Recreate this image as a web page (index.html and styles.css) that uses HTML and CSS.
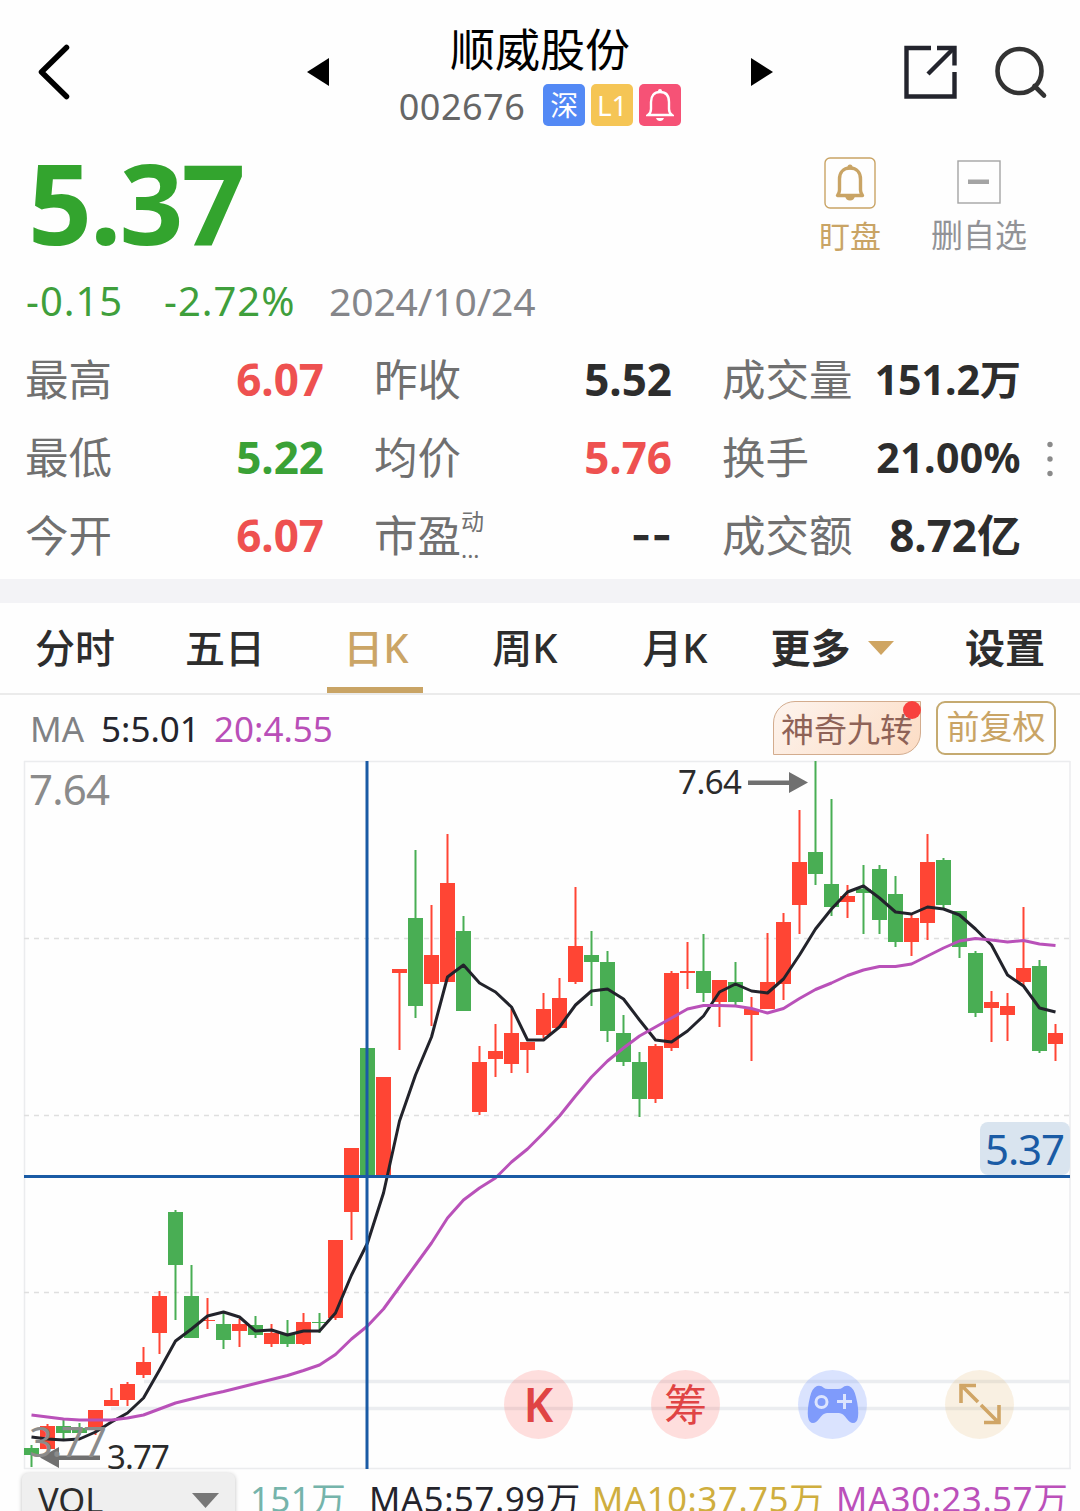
FILE: index.html
```html
<!DOCTYPE html>
<html lang="zh-CN">
<head>
    <meta charset="UTF-8">
    <meta name="viewport" content="width=device-width, initial-scale=1.0">
    <title>顺威股份 002676</title>
    <link rel="stylesheet" href="styles.css">
</head>
<body>
    <header class="topbar">
        <svg class="back" width="34" height="56" viewBox="0 0 34 56"><path d="M29.500 3.500 L4.500 28 L29.500 52.500"/></svg>
        <div class="switcher">
            <svg width="23" height="30" viewBox="0 0 23 30"><path d="M22 1 V29 L0 15 Z"/></svg>
            <div class="stock">
                <h1>顺威股份</h1>
                <div class="stock-sub">
                    <span class="code">002676</span>
                    <span class="badge blue">深</span>
                    <span class="badge yellow">L1</span>
                    <span class="badge pink">
                        <svg width="28" height="34" viewBox="0 0 28 34">
                            <path d="M14 4 C8 4 5 8 5 14 V21 Q5 25 2 27 H26 Q23 25 23 21 V14 C23 8 20 4 14 4 Z" fill="none" stroke="#fff" stroke-width="2.4"/>
                            <circle cx="14" cy="3" r="2" fill="#fff"/>
                            <path d="M10 30 H18 Q17 33 14 33 Q11 33 10 30 Z" fill="#fff"/>
                        </svg>
                    </span>
                </div>
            </div>
            <svg width="23" height="30" viewBox="0 0 23 30"><path d="M1 1 V29 L23 15 Z"/></svg>
        </div>
        <div class="tools">
            <svg width="54" height="54" viewBox="0 0 54 54" fill="none" stroke="#23242d" stroke-width="4.4">
                <path d="M27 3 H2.5 V51.5 H50.5 V27"/>
                <path d="M33 3 H50.5 V20.5"/>
                <path d="M49 4 L24 29"/>
            </svg>
            <svg width="54" height="54" viewBox="0 0 54 54" fill="none" stroke="#333" stroke-width="4.6">
                <circle cx="25.500" cy="26" r="22"/>
                <path d="M40.500 41 L50 50.500" stroke-linecap="round"/>
            </svg>
        </div>
    </header>

    <section class="quote">
        <div class="quote-main">
            <div class="price">5.37</div>
            <div class="change">
                <span class="diff">-0.15</span>
                <span class="pct">-2.72%</span>
                <span class="date">2024/10/24</span>
            </div>
        </div>
        <div class="actions">
            <div class="action watch">
                <svg width="52" height="52" viewBox="0 0 52 52" fill="none" stroke="#c9a465">
                    <rect x="1" y="1" width="50" height="50" rx="5" stroke-width="1.4"/>
                    <path d="M26 11 C19 11 15.500 16 15.500 22 V33 Q15.500 36 13.500 38.500 H38.500 Q36.500 36 36.500 33 V22 C36.500 16 33 11 26 11 Z" stroke-width="3.400" stroke-linejoin="round"/>
                    <circle cx="26" cy="10" r="2.500" fill="#c9a465" stroke="none"/>
                    <path d="M21 39 H31 Q30 43.500 26 43.500 Q22 43.500 21 39 Z" fill="#c9a465" stroke="none"/>
                </svg>
                <span>盯盘</span>
            </div>
            <div class="action remove">
                <svg width="44" height="44" viewBox="0 0 44 44">
                    <rect x="1" y="1" width="42" height="42" fill="none" stroke="#a4a4a4" stroke-width="1.4"/>
                    <rect x="11" y="19.500" width="21" height="4.500" fill="#a4a4a4"/>
                </svg>
                <span>删自选</span>
            </div>
        </div>
    </section>

    <section class="stats">
        <div class="stat"><span>最高</span><b class="up">6.07</b></div>
        <div class="stat"><span>昨收</span><b>5.52</b></div>
        <div class="stat small"><span>成交量</span><b>151.2万</b></div>
        <div class="stat"><span>最低</span><b class="down">5.22</b></div>
        <div class="stat"><span>均价</span><b class="up">5.76</b></div>
        <div class="stat small"><span>换手</span><b class="rate">21.00%</b></div>
        <div class="stat"><span>今开</span><b class="up">6.07</b></div>
        <div class="stat"><span class="pe">市盈<small><i>动</i><i>...</i></small></span><b class="none">--</b></div>
        <div class="stat"><span>成交额</span><b>8.72亿</b></div>
        <svg class="more-dots" width="8" height="36" viewBox="0 0 8 36" fill="#8a8a8a">
            <circle cx="4" cy="3.500" r="2.700"/><circle cx="4" cy="18" r="2.700"/><circle cx="4" cy="32.500" r="2.700"/>
        </svg>
    </section>

    <nav class="tabs">
        <span class="tab">分时</span>
        <span class="tab">五日</span>
        <span class="tab active">日K</span>
        <span class="tab">周K</span>
        <span class="tab">月K</span>
        <span class="tab strong more">更多<svg width="26" height="14" viewBox="0 0 26 14"><path d="M0 0 H26 L13 14 Z" fill="#cfa562"/></svg></span>
        <span class="tab strong">设置</span>
    </nav>

    <div class="ma-row">
        <span class="ma-name">MA</span>
        <span class="ma5">5:5.01</span>
        <span class="ma20">20:4.55</span>
        <span class="nine">神奇九转<i class="dot"></i></span>
        <span class="adjust">前复权</span>
    </div>

    <div class="chart">
        <svg id="kline" width="1080" height="709" viewBox="0 761 1080 709">
            <g class="frame">
                <path d="M24.500 761 V1469 M24 761.500 H1070 M1070 761 V1469 M24 1468.500 H1071"/>
            </g>
            <g class="grid">
                <path d="M24 938.500 H1070 M24 1115.500 H1070 M24 1292.500 H1070"/>
            </g>
            <path class="gap" d="M144 1381.500 H1070 M111 1408.500 H1070"/>
            <g id="candles"></g>
            <polyline id="ma5" class="line5"/>
            <polyline id="ma20" class="line20"/>

            <!-- high / low markers -->
            <path class="arrow" d="M748 780.500 H789 V772 L808 782.500 L789 793 V785 H748 Z"/>
            <text class="mark" x="678" y="794" textLength="64">7.64</text>
            <path class="arrow" d="M100 1455.500 H59 V1447 L40 1457.500 L59 1468 V1460 H100 Z"/>
            <text class="mark" x="107" y="1469" textLength="63">3.77</text>
            <text class="axis" x="29" y="805" textLength="81">7.64</text>
            <text class="axis" x="29" y="1457" textLength="78">3.77</text>

            <!-- crosshair -->
            <path class="cross" d="M367 761 V1469 M24 1176.500 H1070"/>
            <rect x="980" y="1122" width="90" height="53" rx="8" fill="#d9e4ef"/>
            <text class="tag" x="985" y="1165" textLength="80">5.37</text>
        </svg>
        <div class="floats">
            <span class="float red"><b>K</b></span>
            <span class="float red">筹</span>
            <span class="float game">
                <svg width="52" height="40" viewBox="0 0 52 40">
                    <path d="M10 1 Q14 0 17 3 Q18 4 21 4 H31 Q34 4 35 3 Q38 0 42 1 Q47 3 49 12 Q52 24 51 32 Q50 38 46 38 Q43 38 40 34 Q36 28 32 28 H20 Q16 28 12 34 Q9 38 6 38 Q2 38 1 32 Q0 24 3 12 Q5 3 10 1 Z" fill="#7f9bfb"/>
                    <circle cx="14.500" cy="17" r="5.500" fill="none" stroke="#dce4fe" stroke-width="3"/>
                    <path d="M30 16.500 H45 M37.500 9 V24" stroke="#dce4fe" stroke-width="3"/>
                </svg>
            </span>
            <span class="float full">
                <svg width="42" height="42" viewBox="0 0 42 42" fill="none" stroke="#d0a566" stroke-width="3.600">
                    <path d="M2 20 V2.500 H17 M3 3 L19 19"/>
                    <path d="M40 22 V39.500 H25 M39 39 L22 22"/>
                </svg>
            </span>
        </div>
    </div>

    <footer class="vol-row">
        <div class="vol-select">VOL<svg width="27" height="15" viewBox="0 0 27 15"><path d="M0 0 H27 L13.500 15 Z" fill="#777"/></svg></div>
        <span class="v-now">151万</span>
        <span class="v5">MA5:57.99万</span>
        <span class="v10">MA10:37.75万</span>
        <span class="v30">MA30:23.57万</span>
    </footer>
    <script src="chart.js"></script>
</body>
</html>
```
FILE: styles.css
```css
* {
    box-sizing: border-box;
}
html, body {
    margin: 0;
    padding: 0;
}
body {
    width: 1080px;
    height: 1511px;
    overflow: hidden;
    background-color: #fefefe;
    font-family: "Noto Sans", "Noto Sans CJK SC", sans-serif;
    color: #2b2b2b;
}
svg {
    display: block;
    flex: none;
}
i {
    font-style: normal;
}

/* Header */
.topbar {
    display: grid;
    grid-template-columns: 307px 466px 307px;
    align-items: center;
    height: 144px;
}
.back {
    margin-left: 37px;
    fill: none;
    stroke: #000;
    stroke-width: 5.5;
    stroke-linecap: round;
    stroke-linejoin: round;
}
.switcher {
    display: flex;
    align-items: center;
    justify-content: space-between;
}
.stock {
    display: flex;
    flex-direction: column;
    align-items: center;
    height: 104px;
}
h1 {
    flex: none;
    margin: 0;
    font-size: 45px;
    font-weight: 400;
    line-height: 60px;
    height: 64px;
    color: #000;
}
.stock-sub {
    display: flex;
    align-items: center;
    gap: 6px;
}
.code {
    font-size: 36px;
    height: 42px;
    line-height: 45px;
    letter-spacing: 0.5px;
    margin-right: 12px;
    color: #666;
}
.badge {
    display: flex;
    align-items: center;
    justify-content: center;
    width: 42px;
    height: 42px;
    border-radius: 5px;
    font-size: 28px;
    line-height: 38px;
    color: #fff;
}
.blue { background-color: #5389f5; }
.yellow { background-color: #f5c555; }
.pink { background-color: #f65276; }
.tools {
    display: flex;
    justify-content: flex-end;
    gap: 36px;
    padding-right: 32px;
}

/* Price */
.quote {
    display: flex;
    justify-content: space-between;
    height: 197px;
    padding: 8px 53px 0 26px;
}
.price {
    padding-left: 2px;
    font-size: 112px;
    font-weight: 700;
    line-height: 100px;
    height: 100px;
    letter-spacing: -2px;
    color: #33a42e;
}
.change {
    display: flex;
    margin-top: 22px;
    font-size: 40px;
    line-height: 54px;
    letter-spacing: 1px;
    color: #3f9f3c;
}
.diff { width: 138px; }
.pct { width: 165px; }
.date {
    font-size: 39px;
    letter-spacing: -0.1px;
    color: #85868a;
}
.actions {
    display: flex;
    gap: 50px;
    padding-top: 5px;
}
.action {
    display: flex;
    flex-direction: column;
    align-items: center;
    font-size: 31px;
    line-height: 50px;
}
.watch {
    gap: 2px;
    color: #c9a465;
}
.remove {
    padding-top: 3px;
    gap: 6px;
    font-size: 32px;
    color: #929397;
}

/* Stats */
.stats {
    position: relative;
    display: grid;
    grid-template-columns: 299px 298px 299px;
    grid-auto-rows: 78px;
    column-gap: 50px;
    height: 262px;
    padding: 0 0 0 25px;
    border-bottom: 24px solid #f3f3f6;
}
.stat {
    display: flex;
    align-items: center;
    justify-content: space-between;
    height: 76px;
    font-size: 43.5px;
    line-height: 75px;
    white-space: nowrap;
    color: #707070;
}
.stat b {
    font-size: 44px;
    color: #2d2d2d;
}
.stat .up { color: #ee5150; }
.stat .down { color: #3aa136; }
.stat.small b {
    font-size: 41px;
    line-height: 79px;
}
.stat .rate {
    letter-spacing: 0.4px;
}
.stat .none {
    font-family: Inter, sans-serif;
    line-height: 86px;
}
.pe {
    display: flex;
    align-items: center;
    line-height: 82px;
}
.pe small {
    display: flex;
    flex-direction: column;
    font-size: 23px;
    line-height: 28px;
}
.more-dots {
    position: absolute;
    left: 1046px;
    top: 100px;
}

/* Tabs */
.tabs {
    display: grid;
    grid-template-columns: repeat(5, 150px) 180px 150px;
    height: 92px;
    border-bottom: 2px solid #ebebeb;
}
.tab {
    display: flex;
    align-items: center;
    justify-content: center;
    height: 90px;
    font-size: 40px;
    font-weight: 500;
    line-height: 88px;
    color: #2d2d2d;
}
.tab svg {
    margin-left: 17px;
}
.strong {
    font-weight: 700;
}
.more {
    padding-right: 16px;
}
.active {
    width: 96px;
    margin-left: 27px;
    border-bottom: 6px solid #c9a465;
    padding: 6px 0 0 2px;
    color: #cba566;
}

/* MA legend */
.ma-row {
    display: flex;
    align-items: center;
    height: 66px;
    padding: 0 24px 0 30px;
    font-size: 35px;
}
.ma-name {
    width: 71px;
    color: #808184;
}
.ma5 {
    width: 113px;
    color: #24242c;
}
.ma20 {
    color: #b94fb8;
}
.nine {
    position: relative;
    width: 148px;
    height: 54px;
    margin-left: auto;
    border: 1.5px solid #d3ac8e;
    border-radius: 22px 0 22px 0;
    background: linear-gradient(135deg, #fdf4ee, #fcdcc4);
    font-size: 33px;
    line-height: 55px;
    text-align: center;
    color: #8e6257;
}
.dot {
    position: absolute;
    right: -1px;
    top: -1px;
    width: 18px;
    height: 18px;
    border-radius: 50%;
    background-color: #f8413e;
}
.adjust {
    width: 120px;
    height: 54px;
    margin-left: 15px;
    border: 2px solid #c5aa70;
    border-radius: 9px;
    font-size: 33px;
    line-height: 47px;
    text-align: center;
    color: #c9a465;
}

/* K-line chart */
.chart {
    position: relative;
    height: 709px;
}
#kline { overflow: visible; }
.frame path { fill: none; stroke: #ebecee; stroke-width: 1.5; }
.grid path { stroke: #dfdfdf; stroke-width: 1.5; stroke-dasharray: 5 5; }
.gap { stroke: #ebedf0; stroke-width: 3.5; }
.rise { fill: #ff4534; }
.fall { fill: #49ae54; }
.line5, .line20 { fill: none; stroke-width: 3; stroke-linejoin: round; }
.line5 { stroke: #22232b; }
.line20 { stroke: #b951b9; }
.arrow { fill: #707070; }
.mark { font-size: 33px; fill: #2b2b2b; }
.axis { font-size: 42px; fill: #8b8b8b; }
.cross { stroke: #1a5ba5; stroke-width: 3; }
.tag { font-size: 42px; fill: #1a5ba5; }
.floats {
    position: absolute;
    left: 504px;
    top: 609px;
    display: flex;
    gap: 78px;
}
.float {
    display: flex;
    align-items: center;
    justify-content: center;
    width: 69px;
    height: 69px;
    border-radius: 50%;
    font-size: 43px;
    line-height: 69px;
}
.float b {
    font-weight: 600;
    font-size: 46px;
}
.red { background-color: rgba(253, 80, 70, 0.18); color: #e04444; }
.game { background-color: rgba(90, 130, 255, 0.22); }
.full { background-color: rgba(225, 180, 100, 0.18); padding-bottom: 2px; }

/* Volume legend */
.vol-row {
    display: flex;
    height: 60px;
    padding: 3px 0 0 22px;
    font-size: 34.5px;
    line-height: 52px;
    letter-spacing: 0.7px;
    white-space: nowrap;
}
.vol-select {
    display: flex;
    align-items: center;
    justify-content: space-between;
    width: 213px;
    height: 54px;
    margin-right: 15px;
    padding: 0 16px;
    border-radius: 6px;
    background-color: #efefef;
    box-shadow: 0 1px 4px rgba(0, 0, 0, 0.25);
    letter-spacing: 0;
}
.v-now { width: 119px; color: #75b4ab; }
.v5 { width: 223px; color: #24242c; }
.v10 { width: 244px; color: #cfae3e; }
.v30 { color: #bb50ba; }
```
FILE: chart.js
```js
// [direction, high, body top, body bottom, low], y coordinates in the svg
const candles = [
    [0,1445,1448,1455,1467],[1,1424,1426,1449,1449],[0,1420,1426,1433,1441],[0,1423,1428,1433,1435],
    [1,1410,1410,1429,1435],[1,1388,1400,1406,1406],[1,1382,1384,1400,1406],[1,1347,1362,1375,1378],
    [1,1291,1296,1333,1354],[0,1210,1212,1265,1320],[0,1265,1296,1338,1338],[1,1298,1320,1321,1329],
    [0,1312,1324,1340,1349],[1,1319,1324,1331,1347],[0,1316,1325,1335,1338],[1,1324,1333,1344,1347],
    [0,1320,1334,1344,1347],[1,1313,1322,1344,1345],[0,1313,1322,1323,1333],[1,1240,1240,1318,1320],
    [1,1148,1148,1212,1240],[0,1048,1048,1176,1176],[1,1077,1077,1176,1176],[1,969,969,973,1050],
    [0,850,918,1006,1018],[1,905,955,984,1026],[1,834,883,982,982],[0,916,931,1011,1011],
    [1,1046,1062,1112,1115],[1,1024,1051,1059,1077],[1,1009,1033,1064,1073],[1,1042,1042,1050,1073],
    [1,993,1009,1035,1038],[1,978,998,1028,1028],[1,887,946,982,984],[0,931,955,962,1006],
    [0,951,962,1031,1042],[0,1015,1033,1062,1066],[0,1052,1062,1099,1117],[1,1044,1046,1099,1103],
    [1,971,973,1048,1051],[1,942,971,973,989],[0,934,971,993,1002],[1,980,980,1002,1027],
    [0,962,982,1002,1006],[1,997,1009,1015,1061],[1,933,982,1009,1009],[1,913,922,984,1000],
    [1,810,862,905,934],[0,761,852,874,885],[0,799,884,907,916],[1,885,896,902,918],
    [0,865,889,893,934],[0,865,869,920,934],[0,876,894,942,947],[1,915,918,942,956],
    [1,834,862,923,940],[0,858,860,905,909],[0,911,911,947,958],[0,951,953,1013,1017],
    [1,991,1002,1008,1042],[1,993,1006,1015,1041],[1,907,968,982,985],[0,960,966,1051,1053],
    [1,1024,1033,1044,1061]
];
const ma5 = [1437,1439,1440,1439,1432,1422,1413,1398,1370,1341,1329,1316,1312,1317,1331,1330,1335,1331,1331,1313,1275,1243,1193,1121,1075,1037,977,965,983,992,1007,1040,1040,1027,1005,991,989,999,1020,1040,1042,1031,1016,992,984,991,993,979,955,929,909,892,886,898,912,914,907,909,915,929,945,975,986,1008,1012];
const ma20 = [1415,1417,1419,1420,1420,1420,1418,1415,1409,1403,1399,1395,1391.5,1387.5,1383.5,1379.5,1375.5,1370.5,1365,1354.5,1339,1326,1309,1287,1265,1243,1218,1200,1188,1178,1162,1149,1133,1116,1096,1077,1061,1048,1036,1027,1018,1009,1005.5,1005.5,1006,1008.5,1013,1008.5,998.5,989.5,983,975.5,970,966.5,966.5,964,956,948,941,938.5,940,942,940.5,944,945.5];

const startX = 31.5;
const step = 16;
const group = document.getElementById('candles');

function addRect(x, y, width, height, cls) {
    const rect = document.createElementNS('http://www.w3.org/2000/svg', 'rect');
    rect.setAttribute('x', x);
    rect.setAttribute('y', y);
    rect.setAttribute('width', width);
    rect.setAttribute('height', height);
    rect.setAttribute('class', cls);
    group.appendChild(rect);
}

candles.forEach(([up, high, top, bottom, low], i) => {
    const x = startX + i * step;
    const cls = up ? 'rise' : 'fall';
    addRect(x - 1, high, 2, low - high, cls);
    addRect(x - 7.5, top, 15, bottom - top, cls);
});

const toPoints = values => values.map((y, i) => `${startX + i * step},${y}`).join(' ');
document.getElementById('ma5').setAttribute('points', toPoints(ma5));
document.getElementById('ma20').setAttribute('points', toPoints(ma20));
```
